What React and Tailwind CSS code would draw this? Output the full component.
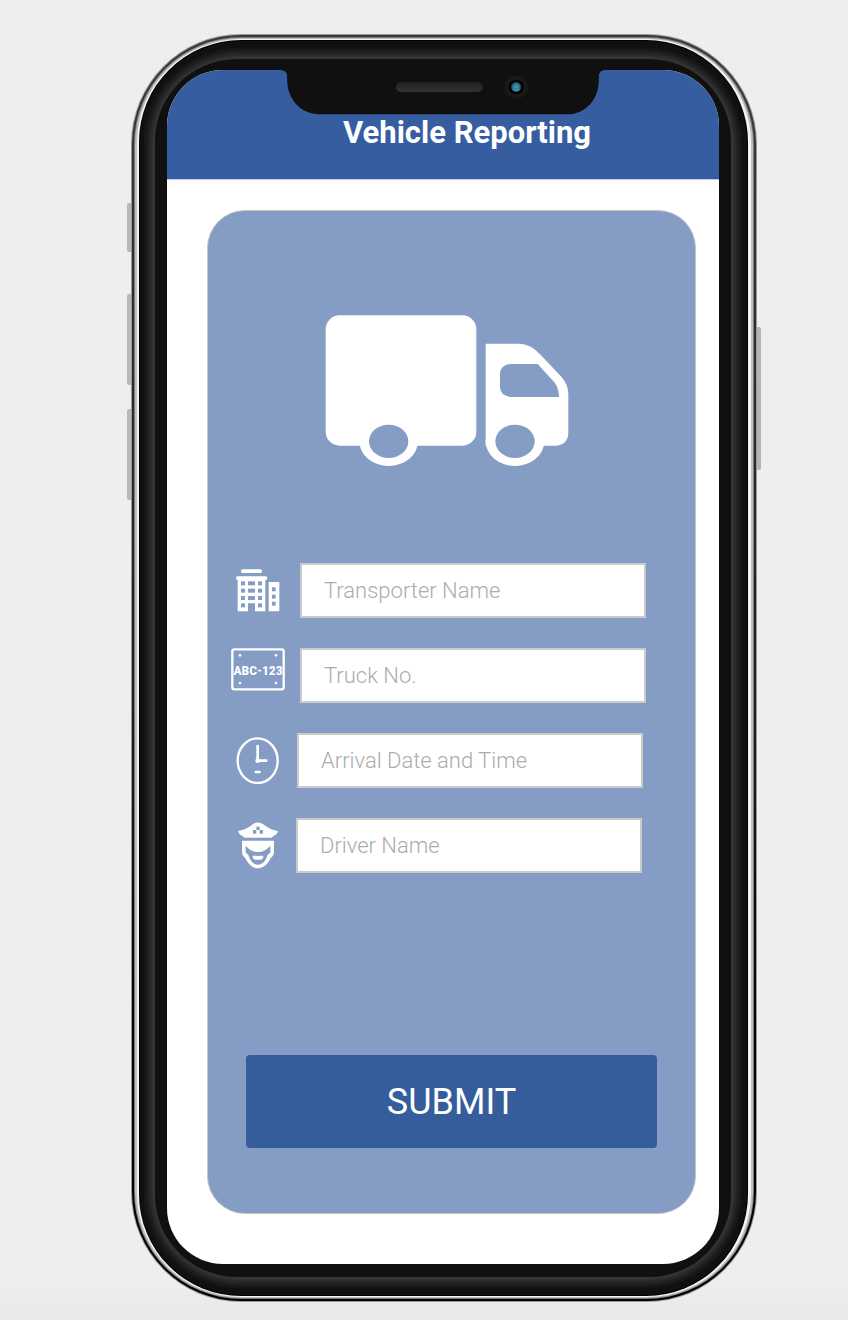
import React from "react";

function TruckIcon() {
  return (
    <svg viewBox="45 45 732 456" className="h-[152px] w-[244px]" aria-hidden="true">
      <g fill="#ffffff">
        <rect x="47" y="46" width="452" height="391" rx="42" />
        <ellipse cx="236" cy="424" rx="88" ry="74" />
        <ellipse cx="615" cy="424" rx="88" ry="74" />
        <path d="M527 131H628Q662 132 690 163L752 228Q775 253 775 283V400Q773 435 738 437H527Z" />
      </g>
      <g fill="#859cc5">
        <ellipse cx="236" cy="424" rx="59" ry="50" />
        <ellipse cx="615" cy="424" rx="59" ry="50" />
        <path d="M602 192H683L733 247Q747 266 747 291H602Q572 288 570 262V220Q572 195 602 192Z" />
      </g>
    </svg>
  );
}

function BuildingIcon() {
  const rows = [81, 103, 125, 147];
  return (
    <svg viewBox="45 44 132 129" className="h-[43px] w-11" aria-hidden="true">
      <g fill="#ffffff">
        <rect x="60" y="45" width="63" height="11" rx="5" />
        <rect x="45" y="66" width="94" height="11" rx="5" />
        <path d="M50 72H133V171H102V147H81V171H50Z" />
        <rect x="143" y="83" width="32" height="88" rx="2" />
      </g>
      <g fill="#859cc5">
        {rows.map((y) => (
          <g key={y}>
            <rect x="60" y={y} width="12" height="12" />
            <rect x="111" y={y} width="12" height="12" />
            {y < 140 && <rect x="81" y={y} width="21" height="12" />}
          </g>
        ))}
        <rect x="153" y="99" width="11" height="12" />
        <rect x="153" y="121" width="11" height="12" />
        <rect x="153" y="142" width="11" height="12" />
      </g>
    </svg>
  );
}

function PlateIcon() {
  return (
    <svg viewBox="33 275 162 129" className="h-[43px] w-[54px]" aria-hidden="true">
      <rect x="37" y="279" width="154" height="120" rx="6" fill="none" stroke="#ffffff" strokeWidth="7" />
      <g fill="#ffffff">
        <circle cx="60" cy="297" r="4" />
        <circle cx="168" cy="297" r="4" />
        <circle cx="60" cy="380" r="4" />
        <circle cx="168" cy="380" r="4" />
      </g>
      <text
        x="114"
        y="355"
        textAnchor="middle"
        fill="#ffffff"
        className="font-['Liberation_Sans_Narrow','Roboto_Condensed',sans-serif] text-[41px] font-bold"
      >
        ABC-123
      </text>
    </svg>
  );
}

function ClockIcon() {
  return (
    <svg viewBox="49 49 132 141" className="h-[47px] w-11" aria-hidden="true">
      <g fill="none" stroke="#ffffff" strokeLinecap="round">
        <ellipse cx="114" cy="120" rx="60" ry="67" strokeWidth="7" />
        <path d="M114 76V120H140" strokeWidth="8" />
        <path d="M108 154H120" strokeWidth="7" />
      </g>
      <circle cx="114" cy="120" r="7" fill="#ffffff" />
    </svg>
  );
}

function DriverIcon() {
  return (
    <svg viewBox="54 310 120 141" className="h-[47px] w-10" aria-hidden="true">
      <g fill="#ffffff">
        <path d="M57 336C75 334 90 323 99 316Q114 307 129 316C138 323 153 334 171 336Q176 337 171 344Q168 350 160 352Q158 357 152 357H76Q70 357 68 352Q60 350 57 344Q53 337 57 336Z" />
        <path
          fillRule="evenodd"
          d="M66 366H162V403Q160 414 152 418C144 437 129 449 114 449C99 449 84 437 76 418Q68 414 66 403ZM77 381V402L85 408C91 427 101 438 114 438C127 438 137 427 143 408L151 402V381C140 394 128 400 114 400C100 400 88 394 77 381Z"
        />
        <path d="M100 411H110L114 413L118 411H128Q131 411 130 415Q129 423 122 423H106Q99 423 98 415Q97 411 100 411Z" />
      </g>
      <g fill="#859cc5">
        <rect x="109" y="324" width="10" height="10" />
        <rect x="99" y="334" width="10" height="11" />
        <rect x="119" y="334" width="10" height="11" />
      </g>
    </svg>
  );
}

function Notch() {
  return (
    <svg
      viewBox="2 30 975 135"
      className="absolute top-0 left-1/2 h-[45px] w-[325px] -translate-x-1/2"
      aria-hidden="true"
    >
      <defs>
        <linearGradient id="speaker" x1="0" y1="0" x2="0" y2="1">
          <stop offset="0" stopColor="#1f1f1f" />
          <stop offset="1" stopColor="#323232" />
        </linearGradient>
        <radialGradient id="lens">
          <stop offset="0" stopColor="#4b9a9c" />
          <stop offset="0.6" stopColor="#2b7795" />
          <stop offset="1" stopColor="#0d2c40" />
        </radialGradient>
      </defs>
      <path
        d="M2 30Q22 30 22 50V58C22 118 62 163 120 163H862C918 163 957 118 957 60V50Q957 30 977 30Z"
        fill="#101010"
      />
      <rect x="348" y="66" width="261" height="30" rx="15" fill="url(#speaker)" />
      <circle cx="709" cy="81" r="35" fill="#191919" />
      <circle cx="709" cy="81" r="22" fill="#000000" />
      <circle cx="709" cy="81" r="16" fill="url(#lens)" />
      <path d="M698 88Q709 97 720 88" fill="none" stroke="#3fa0c4" strokeWidth="3" />
    </svg>
  );
}

function Field({ id, label, icon, gap, iconAlign = "items-center" }) {
  return (
    <div className="flex">
      <label htmlFor={id} aria-label={label} className={`flex w-14 shrink-0 justify-center ${iconAlign}`}>
        {icon}
      </label>
      <input
        id={id}
        type="text"
        placeholder={label}
        className={`h-[55px] w-[346px] min-w-0 rounded-none border-2 border-[#c9cacc] bg-white px-[22px] text-[22px] font-light text-[#444444] outline-none placeholder:text-[#acacac] ${gap}`}
      />
    </div>
  );
}

function PhoneFrame({ children }) {
  return (
    <div className="min-w-0 flex-1 rounded-[110px] bg-[#9a9a9a] p-px">
      <div className="rounded-[109px] bg-linear-to-b from-[#3a3a3a] via-[#222222] to-[#000000] p-[2px]">
        <div className="rounded-[107px] bg-[#7c7c7c] p-px">
          <div className="rounded-[106px] bg-[#bdbdbd] px-[2px] py-px">
            <div className="rounded-[104px] bg-[#f4f4f4] py-px pr-[3px] pl-[2px]">
              <div className="rounded-[102px] bg-[#000000] p-px">
                <div className="rounded-[101px] bg-[#101010] pt-[7px] pr-[5px] pb-[7px] pl-[4px]">
                  <div className="rounded-[95px] bg-[#363636] p-[11px] shadow-[inset_0_0_0_1px_#151515,inset_0_0_0_2px_#181818,inset_0_0_0_3px_#1b1b1b,inset_0_0_0_4px_#1e1e1e,inset_0_0_0_5px_#212121,inset_0_0_0_6px_#252525,inset_0_0_0_7px_#292929,inset_0_0_0_8px_#2d2d2d,inset_0_0_0_9px_#313131,inset_0_0_0_10px_#343434]">
                    <div className="rounded-[82px] bg-[#101010] px-3 pt-[11px] pb-[13px]">{children}</div>
                  </div>
                </div>
              </div>
            </div>
          </div>
        </div>
      </div>
    </div>
  );
}

export default function App() {
  return (
    <main className="flex min-h-screen bg-[linear-gradient(to_bottom,#eeeeee_97%,#e9e9e9)] pt-[34px] pr-[87px] pb-[18px] pl-[127px] font-['Roboto',sans-serif]">
      <div className="flex w-1 shrink-0 flex-col pt-[169px]" aria-hidden="true">
        <span className="mb-[42px] h-[49px] rounded-l-xs bg-[#b9b9b9]" />
        <span className="mb-6 h-[91px] rounded-l-xs bg-[#b9b9b9]" />
        <span className="h-[91px] rounded-l-xs bg-[#b9b9b9]" />
      </div>

      <PhoneFrame>
        <div className="relative overflow-hidden rounded-[56px] bg-white">
          <Notch />
          <header className="border-b border-[#bfcce2] bg-[#355d9f] pt-11 pb-[27px] pl-12">
            <h1 className="text-center text-[31px] leading-[38px] font-bold text-white">Vehicle Reporting</h1>
          </header>

          <div className="pt-[30px] pr-[23px] pb-[50px] pl-10">
            <form
              className="rounded-[38px] border border-[#c3c5c8] bg-[#859cc5] pt-[104px] pb-[65px]"
              onSubmit={(event) => event.preventDefault()}
            >
              <div className="flex justify-center pr-2.5">
                <TruckIcon />
              </div>

              <div className="mt-24 flex flex-col gap-[30px] pl-[22px]">
                <Field id="transporter" label="Transporter Name" icon={<BuildingIcon />} gap="ml-[14px]" />
                <Field id="truck" label="Truck No." icon={<PlateIcon />} gap="ml-[14px]" iconAlign="items-start" />
                <Field id="arrival" label="Arrival Date and Time" icon={<ClockIcon />} gap="ml-[11px]" />
                <Field id="driver" label="Driver Name" icon={<DriverIcon />} gap="ml-[10px]" />
              </div>

              <div className="mt-[182px] px-[38px]">
                <button type="submit" className="h-[93px] w-full rounded-[4px] bg-[#355d9b] text-4xl text-white">
                  SUBMIT
                </button>
              </div>
            </form>
          </div>
        </div>
      </PhoneFrame>

      <div className="flex w-1 shrink-0 flex-col pt-[293px]" aria-hidden="true">
        <span className="h-[143px] rounded-r-xs bg-[#b4b4b4]" />
      </div>
    </main>
  );
}
